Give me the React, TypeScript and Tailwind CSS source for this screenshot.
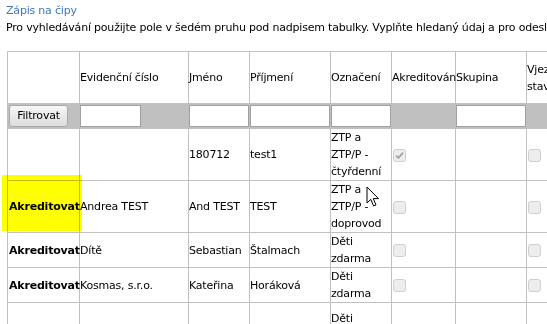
import React from 'react';

type Row = {
  action: string;
  evid: string;
  jmeno: string;
  prijmeni: string;
  oznaceni: string[];
  akred: boolean;
  rowClass: string;
};

const rows: Row[] = [
  { action: "", evid: "", jmeno: "180712", prijmeni: "test1", oznaceni: ["ZTP a", "ZTP/P -", "čtyřdenní"], akred: true, rowClass: "h-[51px]" },
  { action: "Akreditovat", evid: "Andrea TEST", jmeno: "And TEST", prijmeni: "TEST", oznaceni: ["ZTP a", "ZTP/P -", "doprovod"], akred: false, rowClass: "h-[51px]" },
  { action: "Akreditovat", evid: "Dítě", jmeno: "Sebastian", prijmeni: "Štalmach", oznaceni: ["Děti", "zdarma"], akred: false, rowClass: "h-[34px]" },
  { action: "Akreditovat", evid: "Kosmas, s.r.o.", jmeno: "Kateřina", prijmeni: "Horáková", oznaceni: ["Děti", "zdarma"], akred: false, rowClass: "h-[34px]" },
  { action: "", evid: "", jmeno: "", prijmeni: "", oznaceni: ["Děti", "zdarma", "doprovod"], akred: false, rowClass: "h-[68px]" },
];

function Check({ checked }: { checked?: boolean }) {
  return (
    <span className="inline-flex w-[13px] h-[13px] items-center justify-center rounded-[3px] border border-[#cfcfcf] bg-[#ededed] align-middle">
      {checked && (
        <svg width="9" height="9" viewBox="0 0 9 9">
          <path d="M1 4.6 L3.4 7 L8 1.6" fill="none" stroke="#a3a3a3" strokeWidth="1.8" />
        </svg>
      )}
    </span>
  );
}

const td = "border border-[#c0c0c0] p-0 align-middle";

export default function App() {
  return (
    <div
      className="relative w-[547px] h-[324px] overflow-hidden bg-white text-black text-[11px] leading-[17px] tracking-[-0.2px]"
      style={{ fontFamily: '"DejaVu Sans", Verdana, sans-serif' }}
    >
      <div className="pl-[6px] pt-[2px]">
        <div className="text-[#3b78c0]">Zápis na čipy</div>
        <div className="whitespace-nowrap">
          Pro vyhledávání použijte pole v šedém pruhu pod nadpisem tabulky. Vyplňte hledaný údaj a pro odeslání stiskněte Enter.
        </div>
      </div>

      <table className="ml-[7px] mt-[15px] table-fixed border-collapse w-[590px]">
        <colgroup>
          <col className="w-[72px]" />
          <col className="w-[109px]" />
          <col className="w-[61px]" />
          <col className="w-[81px]" />
          <col className="w-[61px]" />
          <col className="w-[64px]" />
          <col className="w-[71px]" />
          <col className="w-[71px]" />
        </colgroup>
        <thead>
          <tr className="h-[52px] text-left font-normal">
            <th className={`${td} font-normal`}></th>
            <th className={`${td} font-normal`}>Evidenční číslo</th>
            <th className={`${td} font-normal`}>Jméno</th>
            <th className={`${td} font-normal`}>Příjmení</th>
            <th className={`${td} font-normal`}>Označení</th>
            <th className={`${td} font-normal whitespace-nowrap`}>Akreditován</th>
            <th className={`${td} font-normal`}>Skupina</th>
            <th className={`${td} font-normal`}>Vjezd na stavbu</th>
          </tr>
          <tr className="h-[25px] bg-[#c0c0c0]">
            <td className="border border-[#c0c0c0] p-0 pl-[1px]">
              <button className="w-[59px] h-[22px] rounded-[3px] border border-[#a9a9a9] bg-gradient-to-b from-[#f7f7f7] to-[#dddddd] text-[11px] leading-[20px] text-black">
                Filtrovat
              </button>
            </td>
            <td className="border border-[#c0c0c0] p-0">
              <input className="block w-[61px] h-[22px] border border-[#a0a0a0] bg-white outline-none" />
            </td>
            <td className="border border-[#c0c0c0] p-0">
              <input className="block w-full h-[22px] border border-[#a0a0a0] bg-white outline-none" />
            </td>
            <td className="border border-[#c0c0c0] p-0">
              <input className="block w-full h-[22px] border border-[#a0a0a0] bg-white outline-none" />
            </td>
            <td className="border border-[#c0c0c0] p-0">
              <input className="block w-full h-[22px] border border-[#a0a0a0] bg-white outline-none" />
            </td>
            <td className="border border-[#c0c0c0] p-0"></td>
            <td className="border border-[#c0c0c0] p-0">
              <input className="block w-full h-[22px] border border-[#a0a0a0] bg-white outline-none" />
            </td>
            <td className="border border-[#c0c0c0] p-0"></td>
          </tr>
        </thead>
        <tbody>
          {rows.map((r, i) => (
            <tr key={i} className={r.rowClass}>
              <td className={`${td} font-bold pl-[1px]`}>{r.action}</td>
              <td className={td}>{r.evid}</td>
              <td className={td}>{r.jmeno}</td>
              <td className={td}>{r.prijmeni}</td>
              <td className={`${td} ${i === 4 ? "align-top pt-[7px]" : ""}`}>
                {r.oznaceni.map((l, j) => (
                  <div key={j}>{l}</div>
                ))}
              </td>
              <td className={`${td} pl-[1px]`}>{i < 4 && <Check checked={r.akred} />}</td>
              <td className={td}></td>
              <td className={`${td} pl-[1px]`}>{i < 4 && <Check />}</td>
            </tr>
          ))}
        </tbody>
      </table>

      {/* highlight marker over the Akreditovat cell */}
      <div className="absolute left-[2px] top-[175px] w-[80px] h-[56px] bg-[#ffff00] mix-blend-multiply pointer-events-none" />

      {/* mouse cursor */}
      <svg className="absolute left-[366px] top-[186px]" width="14" height="22" viewBox="0 0 14 22">
        <path d="M1 1 L1 17 L4.8 13.4 L7.6 20 L10 19 L7.3 12.6 L12.5 12.6 Z" fill="#fff" stroke="#000" strokeWidth="1" strokeLinejoin="round" />
      </svg>
    </div>
  );
}
